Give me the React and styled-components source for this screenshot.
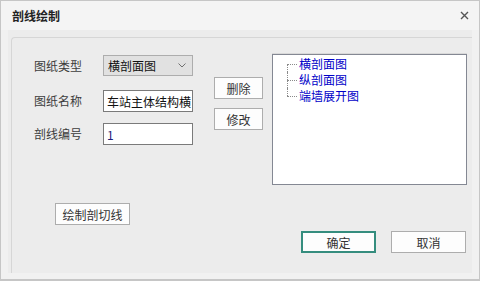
import React from 'react';
import styled, { createGlobalStyle } from 'styled-components';

const GlobalStyle = createGlobalStyle`
  html, body { margin: 0; padding: 0; background: #f2f2f2; overflow: hidden; }
  * { box-sizing: border-box; }
`;

const treeItems = ['横剖面图', '纵剖面图', '端墙展开图'];

function App() {
  return (
    <>
      <GlobalStyle />
      <Window>
        <TitleBar>
          <Title>剖线绘制</Title>
          <CloseButton>
            <svg width="9" height="9" viewBox="0 0 9 9">
              <path d="M1 1 L8 8 M8 1 L1 8" stroke="#555" strokeWidth="1.4" />
            </svg>
          </CloseButton>
        </TitleBar>
        <Body>
          <GroupBox>
            <TopRow>
              <Form>
                <FormRow $top={1}>
                  <Label>图纸类型</Label>
                  <Select>
                    <span>横剖面图</span>
                    <svg width="8" height="5" viewBox="0 0 8 5">
                      <path d="M0.5 0.5 L4 4 L7.5 0.5" stroke="#707070" strokeWidth="1" fill="none" />
                    </svg>
                  </Select>
                </FormRow>
                <FormRow $top={14}>
                  <Label>图纸名称</Label>
                  <TextBox>车站主体结构横</TextBox>
                </FormRow>
                <FormRow $top={11}>
                  <Label>剖线编号</Label>
                  <TextBox $number>1</TextBox>
                </FormRow>
              </Form>
              <ButtonColumn>
                <Button $w={49}>删除</Button>
                <Button $w={49}>修改</Button>
              </ButtonColumn>
              <TreeBox>
                <TreeList>
                  {treeItems.map((t) => (
                    <TreeItem key={t}>{t}</TreeItem>
                  ))}
                </TreeList>
              </TreeBox>
            </TopRow>
            <DrawRow>
              <Button $w={75}>绘制剖切线</Button>
            </DrawRow>
            <Footer>
              <Button $w={75} $primary>确定</Button>
              <Button $w={75}>取消</Button>
            </Footer>
          </GroupBox>
        </Body>
      </Window>
    </>
  );
}

const Window = styled.div`
  width: 480px;
  height: 281px;
  border: 1px solid #c6c6c6;
  border-bottom-width: 2px;
  background: #f1f1f1;
  display: flex;
  flex-direction: column;
  font-family: "Noto Sans CJK SC", "Microsoft YaHei", sans-serif;
  font-size: 12px;
  color: #333;
`;
const TitleBar = styled.div`
  height: 29px;
  flex-shrink: 0;
  background: #f4f4f4;
  display: flex;
  align-items: center;
  justify-content: space-between;
  padding: 0 10px 0 11px;
`;
const Title = styled.span`
  font-weight: bold;
  font-size: 12px;
  color: #222;
`;
const CloseButton = styled.span`
  display: flex;
  align-items: center;
`;
const Body = styled.div`
  height: 243px;
  margin: 0 7px;
  background: #ececec;
  padding: 7px 0 0 3px;
  display: flex;
  overflow: hidden;
`;
const GroupBox = styled.div`
  flex: 1;
  border-top: 1px solid #d6d6d6;
  border-left: 1px solid #d6d6d6;
  border-top-left-radius: 4px;
  display: flex;
  flex-direction: column;
`;
const TopRow = styled.div`
  display: flex;
  align-items: flex-start;
  padding-top: 16px;
`;
const Form = styled.div`
  display: flex;
  flex-direction: column;
  padding-left: 22px;
  width: 181px;
`;
const FormRow = styled.div`
  display: flex;
  align-items: center;
  margin-top: ${(p) => p.$top}px;
`;
const Label = styled.span`
  width: 69px;
  flex-shrink: 0;
  color: #3c3c3c;
  line-height: 16px;
`;
const Select = styled.div`
  width: 90px;
  height: 21px;
  background: #e1e1e1;
  border: 1px solid #adadad;
  display: flex;
  align-items: center;
  justify-content: space-between;
  padding: 0 6px 0 4px;
  color: #111;
`;
const TextBox = styled.div`
  width: 90px;
  height: 22px;
  background: #fff;
  border: 1px solid #7a7a7a;
  display: flex;
  align-items: center;
  padding-left: 3px;
  white-space: nowrap;
  overflow: hidden;
  color: ${(p) => (p.$number ? '#1c1c7a' : '#111')};
`;
const ButtonColumn = styled.div`
  display: flex;
  flex-direction: column;
  gap: 9px;
  margin: 23px 0 0 21px;
`;
const Button = styled.div`
  width: ${(p) => p.$w}px;
  height: 22px;
  background: #fdfdfd;
  border: ${(p) => (p.$primary ? '2px solid #358d7e' : '1px solid #adadad')};
  display: flex;
  align-items: center;
  justify-content: center;
  color: #333;
`;
const TreeBox = styled.div`
  width: 195px;
  height: 131px;
  margin-left: 9px;
  background: #fff;
  border: 1px solid #848893;
  box-shadow: 0 -1px 0 #d9d9d9;
  padding: 1px 0 0 14px;
`;
const TreeList = styled.ul`
  list-style: none;
  margin: 0;
  padding: 0;
`;
const TreeItem = styled.li`
  position: relative;
  padding-left: 12px;
  line-height: 16px;
  height: 16px;
  color: #0000c8;
  &::before {
    content: '';
    position: absolute;
    left: 0;
    top: 0;
    height: 100%;
    border-left: 1px dotted #8a8a8a;
  }
  &:first-child::before { top: 8px; height: 8px; }
  &:last-child::before { height: 8px; }
  &::after {
    content: '';
    position: absolute;
    left: 0;
    top: 8px;
    width: 10px;
    border-top: 1px dotted #8a8a8a;
  }
`;
const DrawRow = styled.div`
  display: flex;
  margin-top: 18px;
  padding-left: 43px;
`;
const Footer = styled.div`
  display: flex;
  justify-content: flex-end;
  gap: 15px;
  margin-top: 6px;
  padding-right: 6px;
`;

export default App;
